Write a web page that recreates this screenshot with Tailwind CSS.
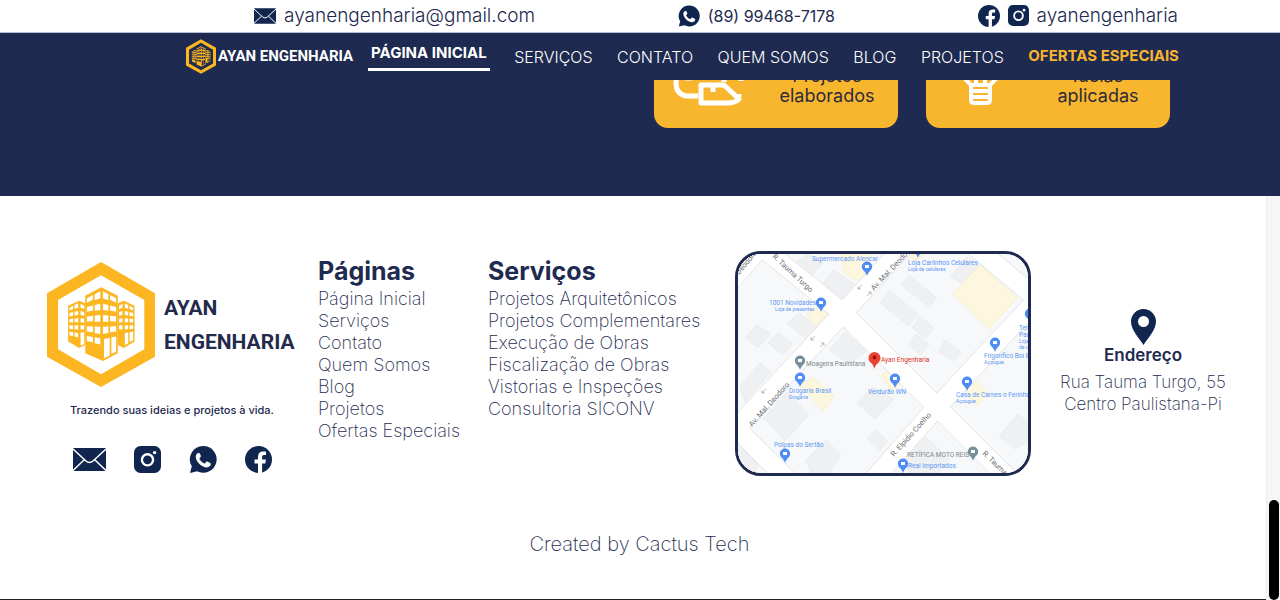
<!DOCTYPE html>
<html lang="pt-BR">
<head>
<meta charset="utf-8">
<meta name="viewport" content="width=device-width, initial-scale=1">
<title>Ayan Engenharia</title>
<script src="https://cdn.jsdelivr.net/npm/@tailwindcss/browser@4"></script>
</head>
<body class="relative min-h-screen overflow-x-hidden bg-white font-[Inter,sans-serif] text-[#1e2a4f]">

<svg class="hidden" aria-hidden="true">
  <symbol id="mail" viewBox="0 0 33 23">
    <rect width="33" height="23" rx="1" fill="#10264f"/>
    <path d="M0 1 L13 13 Q16.500 16 20 13 L33 1 M0 22.500 L11.500 11.500 M33 22.500 L21.500 11.500" fill="none" stroke="#fff" stroke-width="1.500"/>
  </symbol>
  <symbol id="instagram" viewBox="0 0 27 27">
    <rect width="27" height="27" rx="6.500" fill="#10264f"/>
    <circle cx="13.500" cy="13.800" r="5.600" fill="none" stroke="#fff" stroke-width="2.400"/>
    <circle cx="20.600" cy="6.600" r="1.700" fill="#fff"/>
  </symbol>
  <symbol id="whatsapp" viewBox="0 0 28 27">
    <path d="M14.300 0a13.400 13.400 0 1 1-6.200 25.300L1 27l1.800-6.700A13.400 13.400 0 0 1 14.300 0z" fill="#10264f"/>
    <path d="M9.600 6.800c-1.500.4-2.800 2-2.800 3.900 0 4.700 5.600 10.500 11 10.700 2.200 0 4.100-1.500 4.100-3.600 0-.6-3.400-2.400-4.100-2.300-.8.100-1.400 2-2.200 2-1.700-.2-5-3.300-5.200-4.900 0-.8 1.500-1.500 1.500-2.300 0-.6-1-3.400-2.300-3.500z" fill="#fff"/>
  </symbol>
  <symbol id="facebook" viewBox="0 0 27 27">
    <circle cx="13.500" cy="13.500" r="13.500" fill="#10264f"/>
    <path d="M13 27v-9.500h-3.500v-3.900H13v-3c0-3.500 2-5.200 5-5.200l3 .2v3.500h-1.800c-1.700 0-2.100.8-2.100 2v2.500h3.800l-.6 3.900h-3.200V27z" fill="#fff"/>
  </symbol>
  <symbol id="emblem" viewBox="51 38 322 372">
    <path fill="#fbb621" fill-rule="evenodd" d="M212 38 373 131V320L212 410 51 320V131zM212 77 84 151V298L212 372 341 298V151z"/>
    <path fill="#fbb621" d="M114 168 147 153 165 161V285L147 294 114 275zM312 168 280 153 262 161V285L280 294 312 275z"/>
    <path fill="#fbb621" d="M165 138 213 113 262 138V310L218 333 165 310z"/>
    <g fill="currentColor">
      <path d="M170 146 188 136V150L170 159zM193 134 210 125V146L193 152zM170 172 188 167V182L170 186zM193 166 210 162V181L193 183zM170 200 188 198V214L170 215zM193 197 210 196V216L193 216zM170 229 188 230V247L170 245zM193 230 210 231V252L193 249zM170 258 188 261V278L170 273zM193 262 210 265V284L193 280z"/>
      <path d="M257 146 239 136V150L257 159zM234 134 218 125V146L234 152zM257 172 239 167V182L257 186zM234 166 218 162V181L234 183zM257 200 239 198V214L257 215zM234 197 218 196V216L234 216zM257 229 239 230V247L257 245zM234 230 218 231V252L234 249zM257 260 243 262V312L257 305zM238 264 221 267V325L238 316z"/>
      <path d="M118 174 129 168V178L118 182zM133 166 144 161V174L133 177zM118 190 129 187V198L118 200zM133 186 144 184V196L133 197zM118 208 129 206V217L118 218zM133 206 144 205V217L133 217zM118 226 129 226V238L118 237zM133 226 144 226V239L133 238zM118 245 129 247V259L118 256zM133 248 144 249V263L133 260zM151 162 162 168V178L151 174zM151 184 162 187V198L151 196zM151 205 162 207V218L151 217zM151 226 162 226V238L151 239zM151 248 162 247V282L151 287z"/>
      <path d="M308 174 297 168V178L308 182zM293 166 283 161V174L293 177zM308 190 297 187V198L308 200zM293 186 283 184V196L293 197zM308 208 297 206V217L308 218zM293 206 283 205V217L293 217zM308 226 297 226V238L308 237zM293 226 283 226V239L293 238zM308 245 297 247V276L308 271zM293 248 283 249V286L293 280zM276 162 266 168V178L276 174zM276 184 266 187V198L276 196zM276 205 266 207V218L276 217zM276 226 266 226V238L276 239z"/>
    </g>
  </symbol>
</svg>

<header>
  <div class="flex h-[33px] items-center justify-between border-b border-[#b9bfd6] pr-[102px] pb-px pl-[254px] text-[19px] leading-6">
    <a href="mailto:ayanengenharia@gmail.com" class="flex items-center gap-2 font-light whitespace-nowrap"><svg class="h-4 w-[22px]"><use href="#mail"/></svg>ayanengenharia@gmail.com</a>
    <a href="#whatsapp-contato" class="flex items-center gap-2 text-[16px] whitespace-nowrap"><svg class="size-[22px]"><use href="#whatsapp"/></svg>(89) 99468-7178</a>
    <a href="#redes" class="flex items-center gap-2 font-light whitespace-nowrap"><svg class="size-[22px]"><use href="#facebook"/></svg><svg class="size-[21px]"><use href="#instagram"/></svg>ayanengenharia</a>
  </div>
  <nav class="flex h-[47px] items-center gap-[15px] bg-[#1e2a4f] pr-[101px] pl-[186px] text-[16px] font-light whitespace-nowrap text-white">
    <a href="#inicio" class="flex items-center gap-[2px] font-[Roboto,sans-serif] text-[15px] font-bold"><svg class="h-[35px] w-[30px] shrink-0 text-[#1e2a4f]"><use href="#emblem"/></svg>AYAN ENGENHARIA</a>
    <div class="flex flex-1 items-center justify-between">
      <a href="#inicio" class="border-b-[3px] border-white px-[3px] pb-1 text-[15px] font-bold">PÁGINA INICIAL</a>
      <a href="#servicos">SERVIÇOS</a>
      <a href="#contato">CONTATO</a>
      <a href="#quem-somos">QUEM SOMOS</a>
      <a href="#blog">BLOG</a>
      <a href="#projetos">PROJETOS</a>
      <a href="#ofertas" class="text-[15px] font-bold text-[#f9b52e]">OFERTAS ESPECIAIS</a>
    </div>
  </nav>
</header>

<main class="flex h-[116px] items-end justify-end gap-7 overflow-hidden bg-[#1e2a4f] pr-[110px] pb-[68px]">
  <div class="flex h-[120px] w-[244px] items-end rounded-[14px] bg-[#f8b52e] pb-[22px] pl-[18px] text-center text-[18px] leading-5 text-[#2b2c3a]">
    <svg class="h-[50px] w-[72px]" viewBox="0 0 72 50" fill="none" stroke="#fff" stroke-width="5" stroke-linejoin="round">
      <path d="M26 40H14Q4 38 4 27Q4 18 14 22H20M52 18V26"/><path d="M29 29H52L67 43Q63 47 55 47H29zM52 29 67 43M41 29V36"/><path d="M69 24V25M67 38V41"/>
    </svg>
    <p class="flex-1 pl-[12px]">Projetos<br>elaborados</p>
  </div>
  <div class="flex h-[120px] w-[244px] items-end rounded-[14px] bg-[#f8b52e] pb-[22px] pl-[30px] text-center text-[18px] leading-5 text-[#2b2c3a]">
    <svg class="h-[50px] w-[50px]" viewBox="0 0 50 50" fill="none" stroke="#fff" stroke-width="4" stroke-linejoin="round">
      <path d="M6 20 15 29V44Q15 47 18 47H31Q34 47 34 44V29L43 20M15 29H34M15 35H34M15 41H34M20 18V29M29 18V29"/>
    </svg>
    <p class="flex-1 pl-[20px]">Ideias<br>aplicadas</p>
  </div>
</main>

<footer class="flex min-h-[404px] flex-col justify-between border-b border-[#222] pr-[14px]">
  <div class="flex items-start pt-[55px] pl-[47px]">
    <section class="mr-[21px] flex w-[250px] shrink-0 flex-col items-center pt-[11px]">
      <div class="flex w-full items-center gap-[9px]">
        <svg class="h-[125px] w-[108px] shrink-0 text-white"><use href="#emblem"/></svg>
        <p class="font-[Roboto,sans-serif] text-[21px] leading-[34px] font-bold text-[#242a4c]">AYAN<br>ENGENHARIA</p>
      </div>
      <p class="mt-[15px] text-[11px] leading-4 font-medium whitespace-nowrap">Trazendo suas ideias e projetos à vida.</p>
      <div class="mt-[28px] flex items-center gap-[28px]">
        <a href="#email" aria-label="E-mail"><svg class="h-[23px] w-[33px]"><use href="#mail"/></svg></a>
        <a href="#instagram-perfil" aria-label="Instagram"><svg class="size-[27px]"><use href="#instagram"/></svg></a>
        <a href="#whatsapp-contato" aria-label="WhatsApp"><svg class="h-[27px] w-[28px]"><use href="#whatsapp"/></svg></a>
        <a href="#facebook-perfil" aria-label="Facebook"><svg class="size-[27px]"><use href="#facebook"/></svg></a>
      </div>
    </section>
    <section class="w-[170px] shrink-0 pt-1">
      <h2 class="text-[25px] leading-[33px] font-bold">Páginas</h2>
      <ul class="text-[18px] leading-[22px] font-extralight whitespace-nowrap">
        <li><a href="#inicio">Página Inicial</a></li><li><a href="#servicos">Serviços</a></li><li><a href="#contato">Contato</a></li><li><a href="#quem-somos">Quem Somos</a></li><li><a href="#blog">Blog</a></li><li><a href="#projetos">Projetos</a></li><li><a href="#ofertas">Ofertas Especiais</a></li>
      </ul>
    </section>
    <section class="w-[247px] shrink-0 pt-1">
      <h2 class="text-[25px] leading-[33px] font-bold">Serviços</h2>
      <ul class="text-[18px] leading-[22px] font-extralight whitespace-nowrap">
        <li>Projetos Arquitetônicos</li><li>Projetos Complementares</li><li>Execução de Obras</li><li>Fiscalização de Obras</li><li>Vistorias e Inspeções</li><li>Consultoria SICONV</li>
      </ul>
    </section>
    <a href="#mapa" aria-label="Mapa" class="block h-[225px] w-[296px] shrink-0 overflow-hidden rounded-[26px] border-[3px] border-[#1e2a4f]">
      <svg class="size-full font-[Roboto,sans-serif]" viewBox="738 254 290 219" preserveAspectRatio="xMidYMid slice">
        <defs>
          <g id="pin"><path d="M0 8C-1 5-2 4-4 2A5.200 5.200 0 1 1 4 2C2 4 1 5 0 8z"/><path d="M-2-3H2V0H-2z" fill="#fff"/></g>
        </defs>
        <rect x="738" y="254" width="290" height="219" fill="#f7f8fa"/>
        <g fill="#eff0f2" stroke="#e5e7ea" stroke-width=".6">
          <path d="M745 338 756 325 771 333 758 348zM768 343 778 333 793 343 783 355zM787 323 799 313 817 327 806 339zM795 264 807 254 823 263 810 277zM817 290 834 270 854 284 838 305zM829 350 845 332 866 351 850 364zM880 303 890 291 918 314 909 326zM901 285 909 275 937 298 929 307zM912 328 920 316 934 328 926 338zM908 345 917 334 929 345 921 355zM938 352 945 340 961 352 954 361zM951 276 966 257 980 266 963 285zM740 386 760 363 771 372 745 402zM764 418 787 392 809 415 785 441zM806 460 826 440 841 455 828 475H812zM857 403 873 387 894 399 875 419zM867 438 875 430 888 441 880 450zM900 459 926 437 950 460 938 473H910zM999 436 1018 414 1030 425V440L1015 449zM738 450 748 438 764 451 755 472H738z"/>
        </g>
        <g fill="#fef7e0" stroke="#fbe7b2" stroke-width=".6">
          <path d="M953 294 980 265 1017 298 989 329zM841 254H870L862 283 845 273zM807 314 819 306 827 314 816 326zM800 385 812 378 834 396 823 411zM881 376 891 367 905 378 893 391zM966 390 977 382 987 393 977 406zM905 254H925L914 261z"/>
        </g>
        <path fill="none" stroke="#e1e3e6" stroke-width="20" d="M728 437 843 313 910 240M748 236 843 313 937 407 1012 482M873 480 937 407 1013 325 1040 297M970 243 1036 298M728 420 790 482M730 282 765 242"/>
        <path fill="none" stroke="#fff" stroke-width="18.500" d="M728 437 843 313 910 240M748 236 843 313 937 407 1012 482M873 480 937 407 1013 325 1040 297M970 243 1036 298M728 420 790 482M730 282 765 242"/>
        <g fill="#6b6e73" font-size="7.500">
          <text transform="translate(772 257) rotate(43)">R. Tauma Turgo</text>
          <text transform="translate(874 291) rotate(-47)">Av. Mal. Deodoro</text>
          <text transform="translate(752 427) rotate(-48)">Av. Mal. Deodoro</text>
          <text transform="translate(894 457) rotate(-48)">R. Elpidio Coelho</text>
          <text transform="translate(982 454) rotate(44)">R. Tauma</text>
          <text transform="translate(739 275) rotate(-50)">Deodoro</text>
        </g>
        <g fill="none" stroke="#9aa0a6" stroke-width=".7"><path d="M815 336 811 340V337M811 340H814M820 347 824 343M824 346V343H821M862 285 858 289V286M858 289H861M867 296 871 292M871 295V292H868M766 389 762 393V390M762 393H765"/></g>
        <g fill="#4f8df5"><use href="#pin" x="867" y="268"/><use href="#pin" x="821" y="304"/><use href="#pin" x="918" y="250"/><use href="#pin" x="995" y="344"/><use href="#pin" x="1030" y="315"/><use href="#pin" x="800" y="379"/><use href="#pin" x="895" y="380"/><use href="#pin" x="967" y="383"/><use href="#pin" x="785" y="455"/><use href="#pin" x="903" y="465"/></g>
        <g fill="#78909c"><use href="#pin" x="800" y="362"/><use href="#pin" x="973" y="453"/></g>
        <path d="M874 369Q874 365 870 362A6 6 0 1 1 879 362Q875 365 874 369z" fill="#ea4335"/><circle cx="874.500" cy="357.500" r="2" fill="#a50e0e"/>
        <g fill="#5c97f5" font-size="6.500">
          <text x="812" y="261">Supermercado Alencar</text><text x="908" y="265">Loja Carlinhos Celulares</text><text x="769" y="305">1001 Novidades</text><text x="984" y="358">Frigorífico Boi B</text><text x="1019" y="330">Ter</text><text x="1019" y="337">Pau</text><text x="789" y="393">Drogaria Brasil</text><text x="868" y="394">Verdurão WN</text><text x="956" y="397">Casa de Carnes o Ferinha</text><text x="774" y="447">Polpas do Sertão</text><text x="908" y="468">Real Importados</text>
          <g font-size="5"><text x="908" y="271">Loja de celulares</text><text x="775" y="311">Loja de presentes</text><text x="984" y="364">Açougue</text><text x="1019" y="343">Loja</text><text x="1019" y="349">de c</text><text x="789" y="399">Drogaria</text><text x="956" y="403">Açougue</text></g>
        </g>
        <g fill="#80868b" font-size="6.500"><text x="806" y="366">Moageira Paulistana</text><text x="907" y="457">RETÍFICA MOTO REIS</text></g>
        <text x="881" y="362" fill="#d93025" font-size="6.500">Ayan Engenharia</text>
      </svg>
    </a>
    <address class="flex flex-1 flex-col items-center pt-[58px] pr-[11px] text-center not-italic">
      <svg class="h-[36px] w-[25px]" viewBox="0 0 25 36"><path fill="#10264f" fill-rule="evenodd" d="M12.500 0A12.500 12.500 0 0 1 25 12.500C25 21 17 29 12.500 36 8 29 0 21 0 12.500A12.500 12.500 0 0 1 12.500 0zm0 7a5.500 5.500 0 1 0 0 11 5.500 5.500 0 0 0 0-11z"/></svg>
      <h3 class="text-[17px] leading-5 font-semibold">Endereço</h3>
      <p class="mt-[6px] text-[17px] leading-[22px] font-extralight whitespace-nowrap">Rua Tauma Turgo, 55<br>Centro Paulistana-Pi</p>
    </address>
  </div>
  <p class="pb-[41px] pl-[13px] text-center text-[20px] leading-7 font-extralight">Created by Cactus Tech</p>
</footer>

<div class="absolute top-[196px] right-0 bottom-0 flex w-[14px] items-end justify-center border-l border-[#ececec] bg-[#f6f6f6]" aria-hidden="true">
  <div class="h-[100px] w-[10px] rounded-full bg-black"></div>
</div>
</body>
</html>
